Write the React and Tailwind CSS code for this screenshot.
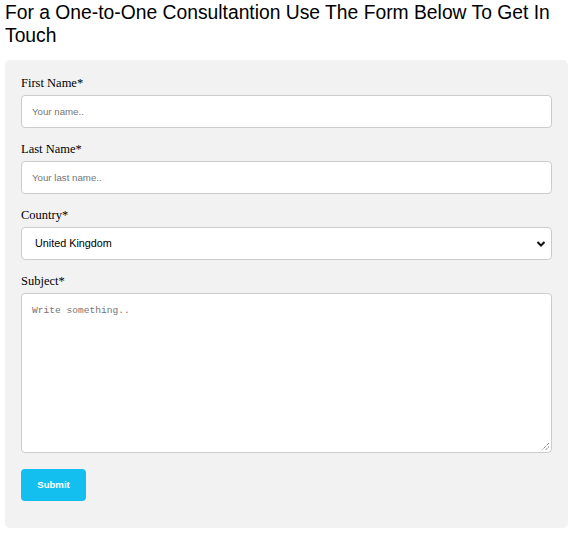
import React from "react";

function Label({ children }) {
  return (
    <label className="block h-[15px] leading-[15px] text-[12.5px] text-black mb-[4px]" style={{ fontFamily: '"Liberation Serif", "Times New Roman", serif' }}>
      {children}
    </label>
  );
}

export default function App() {
  return (
    <div className="w-[574px] h-[536px] bg-white" style={{ fontFamily: '"Liberation Sans", Arial, sans-serif' }}>
      <h3 className="pl-[5px] pr-[2px] pt-[1px] text-[19.3px] leading-[23px] font-normal text-black m-0">
        For a One-to-One Consultantion Use The Form Below To Get In Touch
      </h3>
      <div className="mt-[13px] mx-[5px] w-[563px] h-[468px] bg-[#f2f2f2] rounded-[5px] px-[16px] pt-[16px]">
        <Label>First Name*</Label>
        <input
          type="text"
          placeholder="Your name.."
          className="block w-[531px] h-[33px] mb-[14px] border border-[#cccccc] rounded-[4px] bg-white px-[10px] text-[9.7px] placeholder:text-[#757575] outline-none"
        />
        <Label>Last Name*</Label>
        <input
          type="text"
          placeholder="Your last name.."
          className="block w-[531px] h-[33px] mb-[14px] border border-[#cccccc] rounded-[4px] bg-white px-[10px] text-[9.7px] placeholder:text-[#757575] outline-none"
        />
        <Label>Country*</Label>
        <div className="relative w-[531px] h-[33px] mb-[14px] border border-[#cccccc] rounded-[4px] bg-white flex items-center">
          <span className="pl-[13px] text-[10.8px] text-black">United Kingdom</span>
          <svg className="absolute right-[5px] top-[12px]" width="10" height="8" viewBox="0 0 10 8">
            <path d="M1.5 2 L5 5.5 L8.5 2" fill="none" stroke="#111" strokeWidth="2" />
          </svg>
        </div>
        <Label>Subject*</Label>
        <div className="relative w-[531px] h-[160px] border border-[#cccccc] rounded-[4px] bg-white px-[10px] pt-[9px] text-[9.6px] leading-[14px]">
          <span className="text-[#757575]" style={{ fontFamily: '"Liberation Mono", "DejaVu Sans Mono", monospace' }}>
            Write something..
          </span>
          <svg className="absolute right-[1px] bottom-[1px]" width="9" height="9" viewBox="0 0 9 9">
            <path d="M8 1 L1 8 M8 4.5 L4.5 8" stroke="#555" strokeWidth="1" strokeDasharray="1 1" fill="none" />
          </svg>
        </div>
        <button className="mt-[16px] w-[65px] h-[32px] rounded-[4px] bg-[#13bfef] text-white font-bold text-[9.6px] flex items-center justify-center">
          Submit
        </button>
      </div>
    </div>
  );
}
